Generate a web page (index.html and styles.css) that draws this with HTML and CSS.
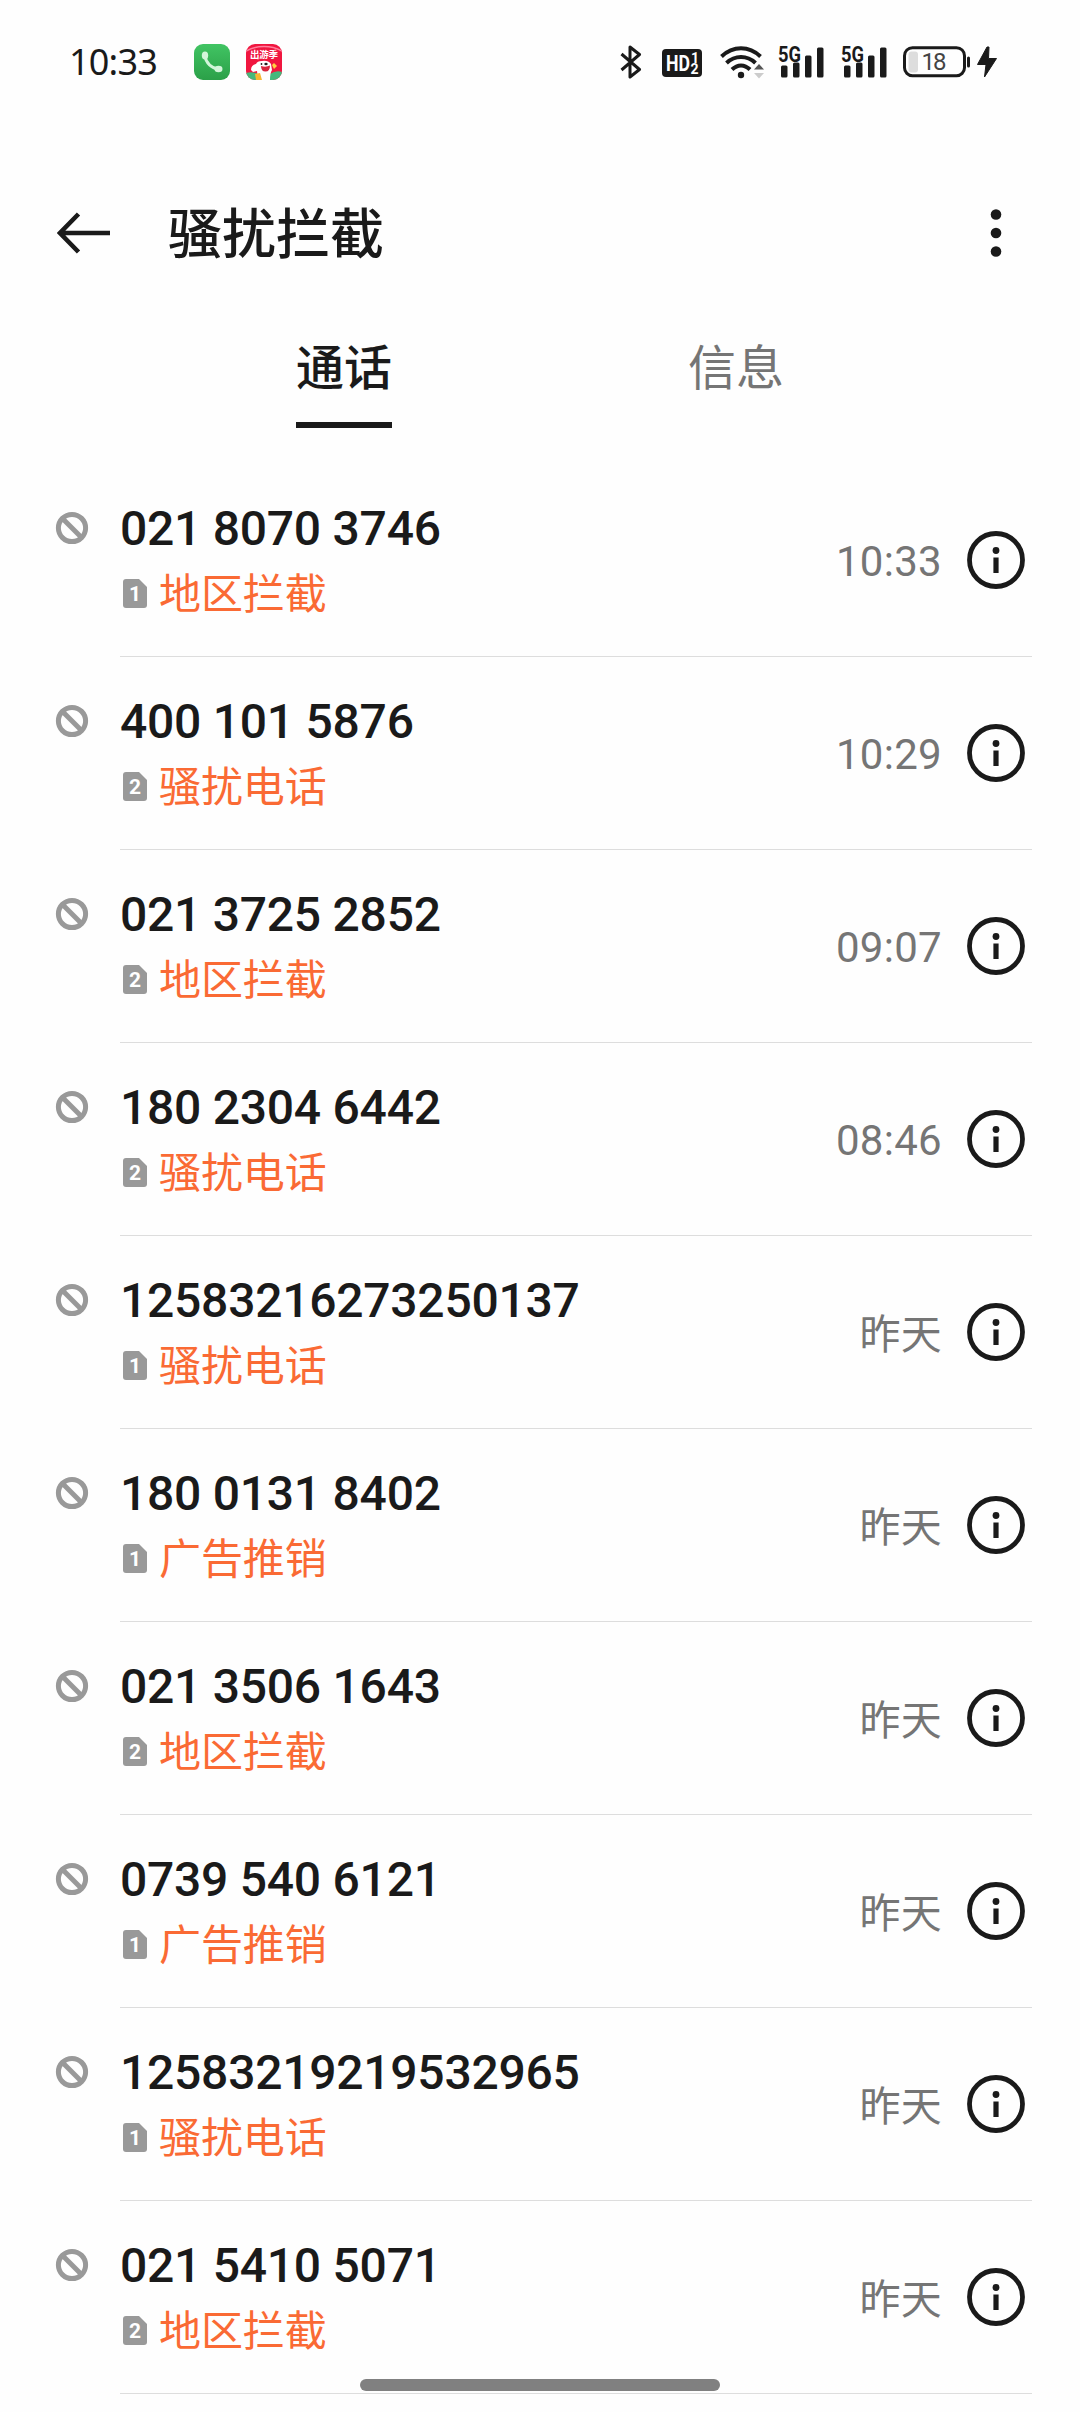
FILE: index.html
```html
<!DOCTYPE html>
<html lang="zh-CN">
  <head>
    <meta charset="utf-8">
    <title>骚扰拦截</title>
    <link rel="stylesheet" href="styles.css">
  </head>
  <body>
    <!-- shared icons -->
    <svg class="icon-defs" width="0" height="0">
      <symbol id="block" viewBox="0 0 34 34">
        <circle cx="17" cy="17" r="13.6" fill="none" stroke="#999" stroke-width="5"/>
        <path d="M7.5 7.5l19 19" stroke="#999" stroke-width="5"/>
      </symbol>
      <symbol id="sim" viewBox="0 0 24 29">
        <path d="M3 0h13l8 8v18a3 3 0 0 1-3 3H3a3 3 0 0 1-3-3V3a3 3 0 0 1 3-3z" fill="#999"/>
      </symbol>
      <symbol id="info" viewBox="0 0 58 58">
        <circle cx="29" cy="29" r="26.5" fill="none" stroke="#1a1a1a" stroke-width="4.800"/>
        <circle cx="29" cy="19.500" r="3.400" fill="#1a1a1a"/>
        <path d="M26.400 26.500h5.200v15.500h-5.200z" fill="#1a1a1a"/>
      </symbol>
      <symbol id="bars" viewBox="0 0 48 34">
        <rect x="3" y="20.500" width="6.500" height="12" rx="1.500"/>
        <rect x="15" y="17.500" width="6.500" height="15" rx="1.500"/>
        <rect x="27" y="10.500" width="6.500" height="22" rx="1.500"/>
        <rect x="39" y="2.500" width="6.500" height="30" rx="1.500"/>
      </symbol>
    </svg>

    <div class="status-bar">
      <span class="clock">10:33</span>
      <svg class="app-phone" width="36" height="36" viewBox="0 0 36 36">
        <defs>
          <linearGradient id="green" x1="0" y1="0" x2="0" y2="1">
            <stop offset="0" stop-color="#41c463"/>
            <stop offset="1" stop-color="#2ba048"/>
          </linearGradient>
        </defs>
        <rect width="36" height="36" rx="9" fill="url(#green)"/>
        <path d="M10.500 11C12 18.500 17 24 25 25.500" fill="none" stroke="#d3f5da" stroke-width="3"/>
        <ellipse cx="11" cy="11.500" rx="3.200" ry="4" fill="#d3f5da"/>
        <ellipse cx="24.500" cy="25" rx="4" ry="3.200" fill="#d3f5da"/>
      </svg>
      <svg class="app-shop" width="36" height="36" viewBox="0 0 36 36">
        <defs>
          <clipPath id="shop-clip"><rect width="36" height="36" rx="9"/></clipPath>
        </defs>
        <g clip-path="url(#shop-clip)">
          <rect width="36" height="36" fill="#f0163f"/>
          <path d="M0 7C11 1 25 1 36 7" fill="none" stroke="#ff7f9c" stroke-width="1.500"/>
          <path d="M0 29q6-2 12 1h12q6-4 12-2v8H0z" fill="#45b87c"/>
          <path d="M5 26q0-5 5-6 1-3 6-3 6-1 9 3l1 6q-2 3-2 10H12l-1-9-4 1z" fill="#fff"/>
          <path d="M15 22q5 1.500 9-.5 0 6-4.500 6T15 22z" fill="#d9263e"/>
          <path d="M9 30l5-1 2 7H10z" fill="#f7b733"/>
          <path d="M26 21l2-2 3 3-3 3z" fill="#ffd23f"/>
          <circle cx="15.500" cy="20" r=".9" fill="#222"/>
          <ellipse cx="20" cy="20" rx="1.700" ry="1.200" fill="#222"/>
        </g>
        <text x="4" y="13.500" class="shop-text" textLength="28">出游季</text>
      </svg>

      <div class="status-icons">
        <svg class="bluetooth" width="22" height="34" viewBox="0 0 22 34">
          <path d="M1.500 9L19.500 24.500 10 32V2l9.500 7.500L1.500 25" fill="none" stroke="#1a1a1a" stroke-width="3" stroke-linejoin="round"/>
        </svg>
        <svg class="hd" width="40" height="28" viewBox="0 0 40 28">
          <rect width="40" height="28" rx="4" fill="#1a1a1a"/>
          <text x="4" y="22" class="hd-text" textLength="24" lengthAdjust="spacingAndGlyphs">HD</text>
          <text x="29" y="13.500" class="hd-num">1</text>
          <text x="28.500" y="25" class="hd-num">2</text>
        </svg>
        <svg class="wifi" width="46" height="34" viewBox="0 0 46 34">
          <g fill="none" stroke="#1a1a1a" stroke-width="4">
            <path d="M1.500 11.500C13 .5 29 .5 40.500 11.500"/>
            <path d="M6.500 18C15 10 27 10 35.500 18"/>
            <path d="M12 24.500C17.500 19 24.500 19 30 24.500"/>
          </g>
          <circle cx="21" cy="30" r="3.200" fill="#1a1a1a"/>
          <path d="M34 24.500l5-5.500 5 5.500z" fill="#555"/>
          <path d="M34 28l5 5.500 5-5.500z" fill="#ccc"/>
        </svg>
        <svg class="signal" width="48" height="34">
          <use href="#bars"/>
          <text x="0" y="16.500" class="net-text" textLength="23" lengthAdjust="spacingAndGlyphs">5G</text>
        </svg>
        <svg class="signal2" width="48" height="34">
          <use href="#bars"/>
          <text x="0" y="16.500" class="net-text" textLength="23" lengthAdjust="spacingAndGlyphs">5G</text>
        </svg>
        <svg class="battery" width="68" height="32" viewBox="0 0 68 32">
          <rect x="1.500" y="1.700" width="60" height="28" rx="8" fill="none" stroke="#1a1a1a" stroke-width="3"/>
          <rect x="5.500" y="5.500" width="9.500" height="21" rx="3" fill="#ddd"/>
          <rect x="64" y="10.500" width="3" height="11" rx="1.500" fill="#1a1a1a"/>
          <text x="18.500" y="24" class="battery-text" textLength="25">18</text>
        </svg>
        <svg class="bolt" width="20" height="32" viewBox="0 0 20 32">
          <path d="M10 1L.5 18.500h8.500L7.500 31 19.500 12.500h-8L12 1z" fill="#1a1a1a" stroke="#1a1a1a"/>
        </svg>
      </div>
    </div>

    <div class="header">
      <svg class="back" width="54" height="42" viewBox="0 0 54 42">
        <path d="M21.500 2L3 21l18.500 19M3 21h50" fill="none" stroke="#1a1a1a" stroke-width="4.600"/>
      </svg>
      <h1>骚扰拦截</h1>
      <svg class="more" width="12" height="50" viewBox="0 0 12 50" fill="#1a1a1a">
        <circle cx="6" cy="6.500" r="5.300"/>
        <circle cx="6" cy="25" r="5.300"/>
        <circle cx="6" cy="43.500" r="5.300"/>
      </svg>
    </div>

    <div class="tabs">
      <div class="tab active"><span>通话</span></div>
      <div class="tab"><span>信息</span></div>
    </div>

    <div class="call-list">
      <div class="call">
        <svg class="block"><use href="#block"/></svg>
        <div class="call-body">
          <div class="call-text">
            <div class="number">021 8070 3746</div>
            <div class="reason"><span class="sim"><svg><use href="#sim"/></svg><b>1</b></span><span class="label">地区拦截</span></div>
          </div>
          <span class="time">10:33</span>
          <svg class="info"><use href="#info"/></svg>
        </div>
      </div>
      <div class="call">
        <svg class="block"><use href="#block"/></svg>
        <div class="call-body">
          <div class="call-text">
            <div class="number">400 101 5876</div>
            <div class="reason"><span class="sim"><svg><use href="#sim"/></svg><b>2</b></span><span class="label">骚扰电话</span></div>
          </div>
          <span class="time">10:29</span>
          <svg class="info"><use href="#info"/></svg>
        </div>
      </div>
      <div class="call">
        <svg class="block"><use href="#block"/></svg>
        <div class="call-body">
          <div class="call-text">
            <div class="number">021 3725 2852</div>
            <div class="reason"><span class="sim"><svg><use href="#sim"/></svg><b>2</b></span><span class="label">地区拦截</span></div>
          </div>
          <span class="time">09:07</span>
          <svg class="info"><use href="#info"/></svg>
        </div>
      </div>
      <div class="call">
        <svg class="block"><use href="#block"/></svg>
        <div class="call-body">
          <div class="call-text">
            <div class="number">180 2304 6442</div>
            <div class="reason"><span class="sim"><svg><use href="#sim"/></svg><b>2</b></span><span class="label">骚扰电话</span></div>
          </div>
          <span class="time">08:46</span>
          <svg class="info"><use href="#info"/></svg>
        </div>
      </div>
      <div class="call">
        <svg class="block"><use href="#block"/></svg>
        <div class="call-body">
          <div class="call-text">
            <div class="number">12583216273250137</div>
            <div class="reason"><span class="sim"><svg><use href="#sim"/></svg><b>1</b></span><span class="label">骚扰电话</span></div>
          </div>
          <span class="time day">昨天</span>
          <svg class="info"><use href="#info"/></svg>
        </div>
      </div>
      <div class="call">
        <svg class="block"><use href="#block"/></svg>
        <div class="call-body">
          <div class="call-text">
            <div class="number">180 0131 8402</div>
            <div class="reason"><span class="sim"><svg><use href="#sim"/></svg><b>1</b></span><span class="label">广告推销</span></div>
          </div>
          <span class="time day">昨天</span>
          <svg class="info"><use href="#info"/></svg>
        </div>
      </div>
      <div class="call">
        <svg class="block"><use href="#block"/></svg>
        <div class="call-body">
          <div class="call-text">
            <div class="number">021 3506 1643</div>
            <div class="reason"><span class="sim"><svg><use href="#sim"/></svg><b>2</b></span><span class="label">地区拦截</span></div>
          </div>
          <span class="time day">昨天</span>
          <svg class="info"><use href="#info"/></svg>
        </div>
      </div>
      <div class="call">
        <svg class="block"><use href="#block"/></svg>
        <div class="call-body">
          <div class="call-text">
            <div class="number">0739 540 6121</div>
            <div class="reason"><span class="sim"><svg><use href="#sim"/></svg><b>1</b></span><span class="label">广告推销</span></div>
          </div>
          <span class="time day">昨天</span>
          <svg class="info"><use href="#info"/></svg>
        </div>
      </div>
      <div class="call">
        <svg class="block"><use href="#block"/></svg>
        <div class="call-body">
          <div class="call-text">
            <div class="number">12583219219532965</div>
            <div class="reason"><span class="sim"><svg><use href="#sim"/></svg><b>1</b></span><span class="label">骚扰电话</span></div>
          </div>
          <span class="time day">昨天</span>
          <svg class="info"><use href="#info"/></svg>
        </div>
      </div>
      <div class="call">
        <svg class="block"><use href="#block"/></svg>
        <div class="call-body">
          <div class="call-text">
            <div class="number">021 5410 5071</div>
            <div class="reason"><span class="sim"><svg><use href="#sim"/></svg><b>2</b></span><span class="label">地区拦截</span></div>
          </div>
          <span class="time day">昨天</span>
          <svg class="info"><use href="#info"/></svg>
        </div>
      </div>
    </div>
    <div class="home-bar"></div>
  </body>
</html>
```

FILE: styles.css
```css
* {
  box-sizing: border-box;
  margin: 0;
  padding: 0;
}

body {
  position: relative;
  width: 1080px;
  height: 2412px;
  overflow: hidden;
  background: #fefefe;
  color: #1a1a1a;
  font-family: Roboto, "Noto Sans CJK SC", sans-serif;
}

svg {
  display: block;
  flex-shrink: 0;
}

.icon-defs {
  position: absolute;
}

/* status bar */
.status-bar {
  display: flex;
  align-items: center;
  height: 124px;
  padding: 0 83px 0 69px;
}

.clock {
  width: 125px;
  font-family: "Noto Sans", sans-serif;
  font-size: 36px;
  letter-spacing: -0.8px;
  line-height: 50px;
}

.app-shop {
  margin-left: 16px;
}

.shop-text {
  font-family: "Noto Sans CJK SC", sans-serif;
  font-size: 9.5px;
  font-weight: 700;
  fill: #fff;
}

.status-icons {
  display: flex;
  align-items: center;
  margin-left: auto;
}

.hd {
  margin: 2px 18px 0 20px;
}

.signal {
  margin: 0 15px 0 12px;
}

.signal2 {
  margin-right: 14px;
}

.signal, .signal2 {
  fill: #1a1a1a;
}

.bolt {
  margin-left: 6px;
}

.net-text {
  font-size: 22px;
  font-weight: 700;
}

.hd-text {
  font-size: 22px;
  font-weight: 700;
  fill: #fff;
}

.hd-num {
  font-size: 14px;
  font-weight: 700;
  fill: #fff;
}

.battery-text {
  font-size: 24px;
  fill: #444;
}

/* title */
.header {
  display: flex;
  align-items: center;
  height: 218px;
  padding: 0 78px 0 57px;
}

.header h1 {
  padding-top: 5px;
  margin-left: 57px;
  font-size: 54px;
  font-weight: 500;
  line-height: 80px;
}

.more {
  margin-left: auto;
}

/* tabs */
.tabs {
  display: flex;
  height: 122px;
  padding: 0 148px;
}

.tab {
  flex: 1;
  text-align: center;
  font-size: 48px;
  line-height: 54px;
  color: #757575;
}

.tab span {
  display: inline-block;
  height: 86px;
}

.tab.active {
  color: #1a1a1a;
  font-weight: 500;
}

.tab.active span {
  border-bottom: solid 6px #1a1a1a;
}

/* blocked calls */
.call {
  display: flex;
  height: 193px;
  padding-right: 48px;
}

.block {
  width: 34px;
  height: 34px;
  margin: 47px 31px 0 55px;
}

.call-body {
  display: flex;
  flex: 1;
  align-items: center;
  border-bottom: solid 1px #ddd;
}

.call-text {
  flex: 1;
  padding-top: 2px;
}

.number {
  font-size: 48px;
  font-weight: 500;
  letter-spacing: -0.25px;
  line-height: 64px;
}

.reason {
  display: flex;
  align-items: center;
  height: 64px;
  color: #fa6a34;
  font-size: 42px;
}

.label {
  padding-top: 4px;
  letter-spacing: -0.1px;
  line-height: 60px;
}

.sim {
  position: relative;
  width: 24px;
  height: 29px;
  margin: 0 12px 0 3px;
}

.sim svg {
  width: 24px;
  height: 29px;
}

.sim b {
  position: absolute;
  top: 0;
  left: 0;
  width: 24px;
  color: #fff;
  font-size: 21px;
  line-height: 30px;
  text-align: center;
}

.time {
  padding-top: 2px;
  margin-right: 25px;
  color: #757575;
  font-size: 42px;
  letter-spacing: 0.3px;
}

.time.day {
  padding: 0 0 2px;
  font-size: 41px;
}

.info {
  width: 58px;
  height: 58px;
  margin-right: 7px;
}

.home-bar {
  position: absolute;
  bottom: 21px;
  left: 360px;
  width: 360px;
  height: 12px;
  border-radius: 6px;
  background: #808080;
}
```
